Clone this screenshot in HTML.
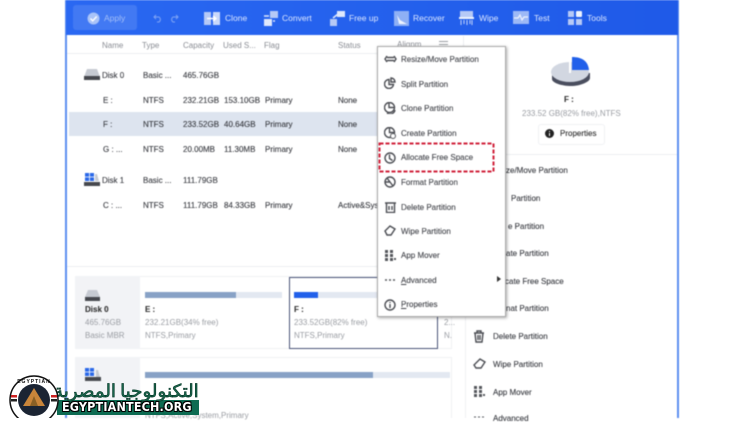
<!DOCTYPE html>
<html><head><meta charset="utf-8">
<style>
html,body{margin:0;padding:0;background:#fff}
body{width:743px;height:418px;overflow:hidden;position:relative;font-family:"Liberation Sans",sans-serif;color:#3a3c42}
#app{position:absolute;inset:0;filter:blur(.45px)}
#app div,#app svg{position:absolute}
.t{font-size:8px;white-space:nowrap;line-height:10px;-webkit-text-stroke:.12px currentColor}
.h{color:#8a8d94;font-size:8px;-webkit-text-stroke:0}
.w{color:#dce7ff;font-size:8.5px;white-space:nowrap;line-height:10px}
.m{font-size:8px;color:#44464c;white-space:nowrap;line-height:10px;left:401px;margin-top:1px;-webkit-text-stroke:.12px currentColor}
.g{color:#9a9da3;-webkit-text-stroke:0}
.s{fill:none;stroke:#4c4e54;stroke-width:1.4}
.ws{fill:#b6c9f6}
</style></head><body>
<div id="app">
<!-- frame -->
<div style="left:65px;top:0;width:2px;height:418px;background:#5d8ff0"></div>
<div style="left:677px;top:0;width:2px;height:418px;background:#5d8ff0"></div>
<!-- toolbar -->
<div style="left:66px;top:0;width:612px;height:35px;background:linear-gradient(90deg,#2a68f2,#1f5ae8)"></div>
<div style="left:73px;top:5px;width:64px;height:25px;background:#4279f3;border-radius:3px"></div>
<svg style="left:87px;top:12px" width="13" height="13"><circle cx="6.5" cy="6.5" r="6" fill="#a9c3f8"/><path d="M3.5 6.5l2.2 2.3 4-4.3" fill="none" stroke="#fff" stroke-width="1.4"/></svg>
<div class="w" style="left:104px;top:13px;color:#a3bff8">Apply</div>
<svg style="left:152px;top:13px" width="28" height="10"><path d="M2 4h5a3 3 0 0 1 0 5H5M4 2L2 4l2 2M26 4h-5a3 3 0 0 0 0 5h2M24 2l2 2-2 2" fill="none" stroke="#7fa4f5"/></svg>
<!-- toolbar icons -->
<svg style="left:204px;top:11px" width="16" height="15"><rect y="1" width="7" height="13" class="ws"/><rect x="9" y="1" width="7" height="13" fill="#c9d8fa"/><path d="M3 7.500h9M9 5l3 2.500L9 10" stroke="#fff" stroke-width="1.500" fill="none"/></svg>
<div class="w" style="left:225px;top:13px">Clone</div>
<svg style="left:263px;top:10px" width="16" height="17"><rect x="7" y="1" width="8" height="7" class="ws"/><rect x="1" y="9" width="8" height="7" fill="#dfe8fc"/><path d="M1 6h5M12 11h-2" stroke="#dfe8fc" stroke-width="1.500"/></svg>
<div class="w" style="left:282px;top:13px">Convert</div>
<svg style="left:329px;top:10px" width="16" height="17"><rect x="8" y="1" width="8" height="6" fill="#dfe8fc"/><rect x="1" y="9" width="7" height="7" class="ws"/><path d="M4 8l5-4" stroke="#dfe8fc" stroke-width="1.600"/></svg>
<div class="w" style="left:349px;top:13px">Free up</div>
<svg style="left:394px;top:11px" width="15" height="15"><rect width="15" height="15" fill="#8fb0f5"/><path d="M3 4l3 5 7 4H5z" fill="#eef3fe"/></svg>
<div class="w" style="left:413px;top:13px">Recover</div>
<svg style="left:459px;top:10px" width="15" height="16"><rect x="1" y="1" width="13" height="6" class="ws"/><rect y="7" width="15" height="2" fill="#eef3fe"/><path d="M2 10v5M5 10v4M8 10v5M11 10v4M13 10v5" stroke="#c3d3f8"/></svg>
<div class="w" style="left:479px;top:13px">Wipe</div>
<svg style="left:513px;top:11px" width="16" height="13"><rect width="16" height="13" fill="#9db9f6"/><path d="M1 7h4l2-3 2 5 2-3h4" stroke="#eef3fe" fill="none" stroke-width="1.200"/></svg>
<div class="w" style="left:534px;top:13px">Test</div>
<svg style="left:568px;top:11px" width="14" height="14"><rect width="6" height="6" class="ws"/><rect x="8" width="6" height="6" rx="1" fill="#eef3fe"/><rect y="8" width="6" height="6" class="ws"/><rect x="8" y="8" width="6" height="6" class="ws"/></svg>
<div class="w" style="left:587px;top:13px">Tools</div>
<!-- column heads -->
<div class="t h" style="left:102px;top:41px">Name</div>
<div class="t h" style="left:142px;top:41px">Type</div>
<div class="t h" style="left:183px;top:41px">Capacity</div>
<div class="t h" style="left:223px;top:41px">Used S...</div>
<div class="t h" style="left:264px;top:41px">Flag</div>
<div class="t h" style="left:338px;top:41px">Status</div>
<div class="t h" style="left:397px;top:40px">Alignm</div>
<div style="left:439px;top:41px;width:9px;height:7px;background:repeating-linear-gradient(#9a9da3 0 1px,#fff 1px 3px)"></div>
<div style="left:67px;top:53px;width:400px;height:1px;background:#eceef1"></div>
<div style="left:463px;top:36px;width:1px;height:17px;background:#eceef1"></div>
<!-- selected row -->
<div style="left:69px;top:112px;width:310px;height:24px;background:#dde4ef"></div>
<!-- table -->
<svg style="left:84px;top:69px" width="16" height="11"><path d="M3 0h10l3 8H0z" fill="#c6cad2"/><rect y="7" width="16" height="4" fill="#46484e"/></svg>
<div class="t" style="left:102px;top:71px">Disk 0</div><div class="t" style="left:143px;top:71px">Basic ...</div><div class="t" style="left:183px;top:71px">465.76GB</div>
<div class="t" style="left:103px;top:96px">E :</div><div class="t" style="left:143px;top:96px">NTFS</div><div class="t" style="left:183px;top:96px">232.21GB</div><div class="t" style="left:224px;top:96px">153.10GB</div><div class="t" style="left:265px;top:96px">Primary</div><div class="t" style="left:338px;top:96px">None</div>
<div class="t" style="left:103px;top:120px">F :</div><div class="t" style="left:143px;top:120px">NTFS</div><div class="t" style="left:183px;top:120px">233.52GB</div><div class="t" style="left:224px;top:120px">40.64GB</div><div class="t" style="left:265px;top:120px">Primary</div><div class="t" style="left:338px;top:120px">None</div>
<div class="t" style="left:103px;top:145px">G : ...</div><div class="t" style="left:143px;top:145px">NTFS</div><div class="t" style="left:183px;top:145px">20.00MB</div><div class="t" style="left:224px;top:145px">11.30MB</div><div class="t" style="left:265px;top:145px">Primary</div><div class="t" style="left:338px;top:145px">None</div>
<svg style="left:84px;top:172px" width="16" height="14"><rect x="1" y="1" width="9" height="8" fill="#2a68e8"/><path d="M1 5h9M5.500 1v8" stroke="#fff" stroke-width=".8"/><path d="M11 2h2l2 7h-4z" fill="#c6cad2"/><rect y="10" width="16" height="4" fill="#46484e"/></svg>
<div class="t" style="left:102px;top:176px">Disk 1</div><div class="t" style="left:143px;top:176px">Basic ...</div><div class="t" style="left:183px;top:176px">111.79GB</div>
<div class="t" style="left:103px;top:201px">C : ...</div><div class="t" style="left:143px;top:201px">NTFS</div><div class="t" style="left:183px;top:201px">111.79GB</div><div class="t" style="left:224px;top:201px">84.33GB</div><div class="t" style="left:265px;top:201px">Primary</div><div class="t" style="left:338px;top:201px">Active&amp;Sys</div>
<!-- bottom -->
<div style="left:67px;top:266px;width:400px;height:1px;background:#eceef1"></div>
<div style="left:75px;top:276px;width:65px;height:73px;background:#f2f3f6"></div>
<div style="left:140px;top:276px;width:312px;height:73px;box-sizing:border-box;border:1px solid #f0f1f4;border-left:0"></div>
<svg style="left:85px;top:290px" width="15" height="11"><path d="M3 0h9l3 7H0z" fill="#c6cad2"/><rect y="7" width="15" height="4" fill="#46484e"/></svg>
<div class="t" style="left:85px;top:305px;font-weight:bold;color:#333">Disk 0</div>
<div class="t g" style="left:85px;top:318px">465.76GB</div>
<div class="t g" style="left:85px;top:331px">Basic MBR</div>
<div style="left:145px;top:292px;width:137px;height:6px;background:#e3e8f1"></div>
<div style="left:145px;top:292px;width:91px;height:6px;background:#88a2c6"></div>
<div class="t" style="left:145px;top:305px;font-weight:bold;color:#333">E :</div>
<div class="t g" style="left:145px;top:318px">232.21GB(34% free)</div>
<div class="t g" style="left:145px;top:331px">NTFS,Primary</div>
<div style="left:289px;top:277px;width:149px;height:72px;box-sizing:border-box;border:1.5px solid #4a5478"></div>
<div style="left:294px;top:292px;width:120px;height:6px;background:#e3e8f1"></div>
<div style="left:294px;top:292px;width:24px;height:6px;background:#2160ea"></div>
<div class="t" style="left:294px;top:305px;font-weight:bold;color:#333">F :</div>
<div class="t g" style="left:294px;top:318px">233.52GB(82% free)</div>
<div class="t g" style="left:294px;top:331px">NTFS,Primary</div>
<div class="t g" style="left:444px;top:318px">2...</div><div class="t g" style="left:444px;top:331px">N.</div>
<div style="left:75px;top:357px;width:65px;height:61px;background:#f2f3f6"></div>
<div style="left:140px;top:357px;width:312px;height:61px;box-sizing:border-box;border:1px solid #f0f1f4;border-left:0;border-bottom:0"></div>
<svg style="left:85px;top:368px" width="16" height="14"><rect x="0" y="0" width="9" height="8" fill="#2a68e8"/><path d="M0 4h9M4.500 0v8" stroke="#fff" stroke-width=".8"/><path d="M11 2h2l2 7h-4z" fill="#c6cad2"/><rect y="9" width="16" height="4" fill="#46484e"/></svg>
<div style="left:145px;top:372px;width:305px;height:6px;background:#e3e8f1"></div>
<div style="left:145px;top:372px;width:228px;height:6px;background:#88a2c6"></div>
<div class="t g" style="left:145px;top:411px">NTFS,Active,System,Primary</div>
<!-- right panel -->
<div style="left:464px;top:154px;width:213px;height:1px;background:#eceef1"></div>
<div style="left:465px;top:267px;width:1px;height:151px;background:#f0f1f4"></div>
<svg style="left:550px;top:55px" width="42" height="32"><path d="M2 18v6c0 4 10 7 19 7s19-4 19-8v-5z" fill="#4a4e5e"/><ellipse cx="20" cy="17" rx="19" ry="10" fill="#d2d7e1"/><path d="M22 2c10 0 16 4 17 13H22z" fill="#2160ea"/><path d="M20 1v17" stroke="#fff" stroke-width="2"/></svg>
<div class="t" style="left:564px;top:95px;font-weight:bold;color:#333">F :</div>
<div class="t g" style="left:522px;top:109px">233.52 GB(82% free),NTFS</div>
<div style="left:538px;top:124px;width:65px;height:19px;border:1px solid #f0f1f4;border-radius:3px"></div>
<svg style="left:545px;top:129px" width="9" height="9"><circle cx="4.500" cy="4.500" r="4.500" fill="#222"/><path d="M4.500 2v1M4.500 4v3" stroke="#fff"/></svg>
<div class="t" style="left:560px;top:129px;color:#333">Properties</div>
<div class="t" style="left:506px;top:166px">ze/Move Partition</div>
<div class="t" style="left:511px;top:194px">Partition</div>
<div class="t" style="left:508px;top:222px">e Partition</div>
<div class="t" style="left:506px;top:249px">ate Partition</div>
<div class="t" style="left:505px;top:277px">cate Free Space</div>
<div class="t" style="left:506px;top:304px">nat Partition</div>
<svg style="left:473px;top:330px" width="12" height="13"><path class="s" d="M1 3h10M4 3V1h4v2M2 3l1 9h6l1-9M5 5v5M7 5v5"/></svg>
<div class="t" style="left:493px;top:332px">Delete Partition</div>
<svg style="left:473px;top:358px" width="13" height="12"><path class="s" d="M1 7l6-6 5 3-4 6H3z"/></svg>
<div class="t" style="left:493px;top:360px">Wipe Partition</div>
<svg style="left:474px;top:386px" width="11" height="11"><path d="M0 0h3v3H0zM5 0h3v3H5zM0 4h3v3H0zM5 4h3v3H5zM0 8h3v3H0zM5 8h3v3H5zM9 8h2v2H9z" fill="#55575c"/></svg>
<div class="t" style="left:493px;top:388px">App Mover</div>
<div class="t" style="left:493px;top:414px">Advanced</div>
<svg style="left:474px;top:416px" width="11" height="2"><path d="M0 1h2M4 1h2M8 1h2" stroke="#55575c"/></svg>
<!-- context menu -->
<div style="left:377px;top:46px;width:129px;height:271px;background:#fff;border:1px solid #aaa;box-sizing:border-box;box-shadow:1px 1px 3px rgba(0,0,0,.35)"></div>
<svg style="left:384px;top:54px" width="13" height="10"><path class="s" d="M3 2L1 5l2 3M10 2l2 3-2 3M3 3.500h7M3 6.500h7"/></svg>
<div class="m" style="top:54px">Resize/Move Partition</div>
<svg style="left:384px;top:77px" width="12" height="12"><path class="s" d="M5 2.500a4.500 4.500 0 1 0 4.500 5H5zM7 1a4 4 0 0 1 4 4H7z"/></svg>
<div class="m" style="top:79px">Split Partition</div>
<svg style="left:384px;top:102px" width="12" height="12"><circle class="s" cx="5.500" cy="5.500" r="5"/><path class="s" d="M5 1v4.500h5.500M3 11a5 5 0 0 0 8-3"/></svg>
<div class="m" style="top:103px">Clone Partition</div>
<svg style="left:384px;top:127px" width="12" height="12"><circle class="s" cx="5.500" cy="5.500" r="5"/><path class="s" d="M5.500 .5v5h5"/><circle cx="9" cy="9" r="2.500" fill="#fff" stroke="#55575c"/></svg>
<div class="m" style="top:128px">Create Partition</div>
<svg style="left:384px;top:152px" width="12" height="12"><circle class="s" cx="6" cy="6" r="5"/><path class="s" d="M5.500 2.500v4l3 2"/></svg>
<div class="m" style="top:152px">Allocate Free Space</div>
<svg style="left:378px;top:142px" width="117" height="31"><rect x="1.500" y="1.500" width="114" height="28" fill="none" stroke="#d0203a" stroke-width="2" stroke-dasharray="4 2"/></svg>
<svg style="left:384px;top:176px" width="12" height="12"><circle class="s" cx="6" cy="6" r="5"/><path class="s" d="M3 2l6 8M1 6h5"/></svg>
<div class="m" style="top:177px">Format Partition</div>
<svg style="left:385px;top:201px" width="11" height="12"><path class="s" d="M0 2h11M1.500 2v9.500h8V2M4 5v4M7 5v4"/></svg>
<div class="m" style="top:202px">Delete Partition</div>
<svg style="left:384px;top:225px" width="12" height="12"><path class="s" d="M1 6l5-5 5 3-4 6H3z"/></svg>
<div class="m" style="top:226px">Wipe Partition</div>
<svg style="left:385px;top:250px" width="11" height="11"><path d="M0 0h3v3H0zM5 0h3v3H5zM0 4h3v3H0zM5 4h3v3H5zM0 8h3v3H0zM5 8h3v3H5zM9 8h2v2H9z" fill="#55575c"/></svg>
<div class="m" style="top:250px">App Mover</div>
<svg style="left:385px;top:279px" width="11" height="2"><path d="M0 1h2M4 1h2M8 1h2" stroke="#55575c" stroke-width="1.400"/></svg>
<div class="m" style="top:275px"><u>A</u>dvanced</div>
<svg style="left:497px;top:276px" width="4" height="6"><path d="M0 0l4 3-4 3z" fill="#333"/></svg>
<svg style="left:384px;top:299px" width="12" height="12"><circle class="s" cx="6" cy="6" r="5"/><path class="s" d="M6 3v1M6 5v4"/></svg>
<div class="m" style="top:299px"><u>P</u>roperties</div>
</div>
<!-- logo -->
<div style="position:absolute;left:57px;top:400px;width:142px;height:15px;background:#0d6b52"></div>
<div dir="rtl" style="position:absolute;right:544px;top:380px;width:max-content;font:400 15.5px/20px 'Noto Sans CJK SC','DejaVu Sans',sans-serif;color:#1b6a50;white-space:nowrap;transform-origin:right center;transform:scale(1.18,1.15);-webkit-text-stroke:.6px #0a3d2c">التكنولوجيا المصرية</div>
<div style="position:absolute;left:62px;top:400px;font:bold 12px/15px 'DejaVu Sans',sans-serif;letter-spacing:.2px;color:#fff;white-space:nowrap;text-shadow:0 0 1px #000,1px 1px 0 #000,-1px -1px 0 #000,1px -1px 0 #000,-1px 1px 0 #000;transform-origin:left;transform:scaleX(.93)">EGYPTIANTECH.ORG</div>
<svg style="position:absolute;left:9px;top:375px" width="50" height="43" viewBox="0 0 50 43"><circle cx="25" cy="25" r="24" fill="#fff" stroke="#111" stroke-width="1.500"/><circle cx="25" cy="25" r="16" fill="#1b2433"/><path d="M25 13l11 18H14z" fill="#c9853a"/><path d="M25 21l4 10h-8z" fill="#8a6025"/><rect x="2" y="20" width="6" height="2.500" fill="#c22"/><rect x="2" y="24" width="6" height="2.500" fill="#222"/><rect x="42" y="20" width="6" height="2.500" fill="#c22"/><rect x="42" y="24" width="6" height="2.500" fill="#222"/><text x="25" y="8" font-size="5" font-weight="bold" text-anchor="middle" font-family="Liberation Sans" fill="#111" letter-spacing="1">EGYPTIAN</text></svg>
</body></html>
